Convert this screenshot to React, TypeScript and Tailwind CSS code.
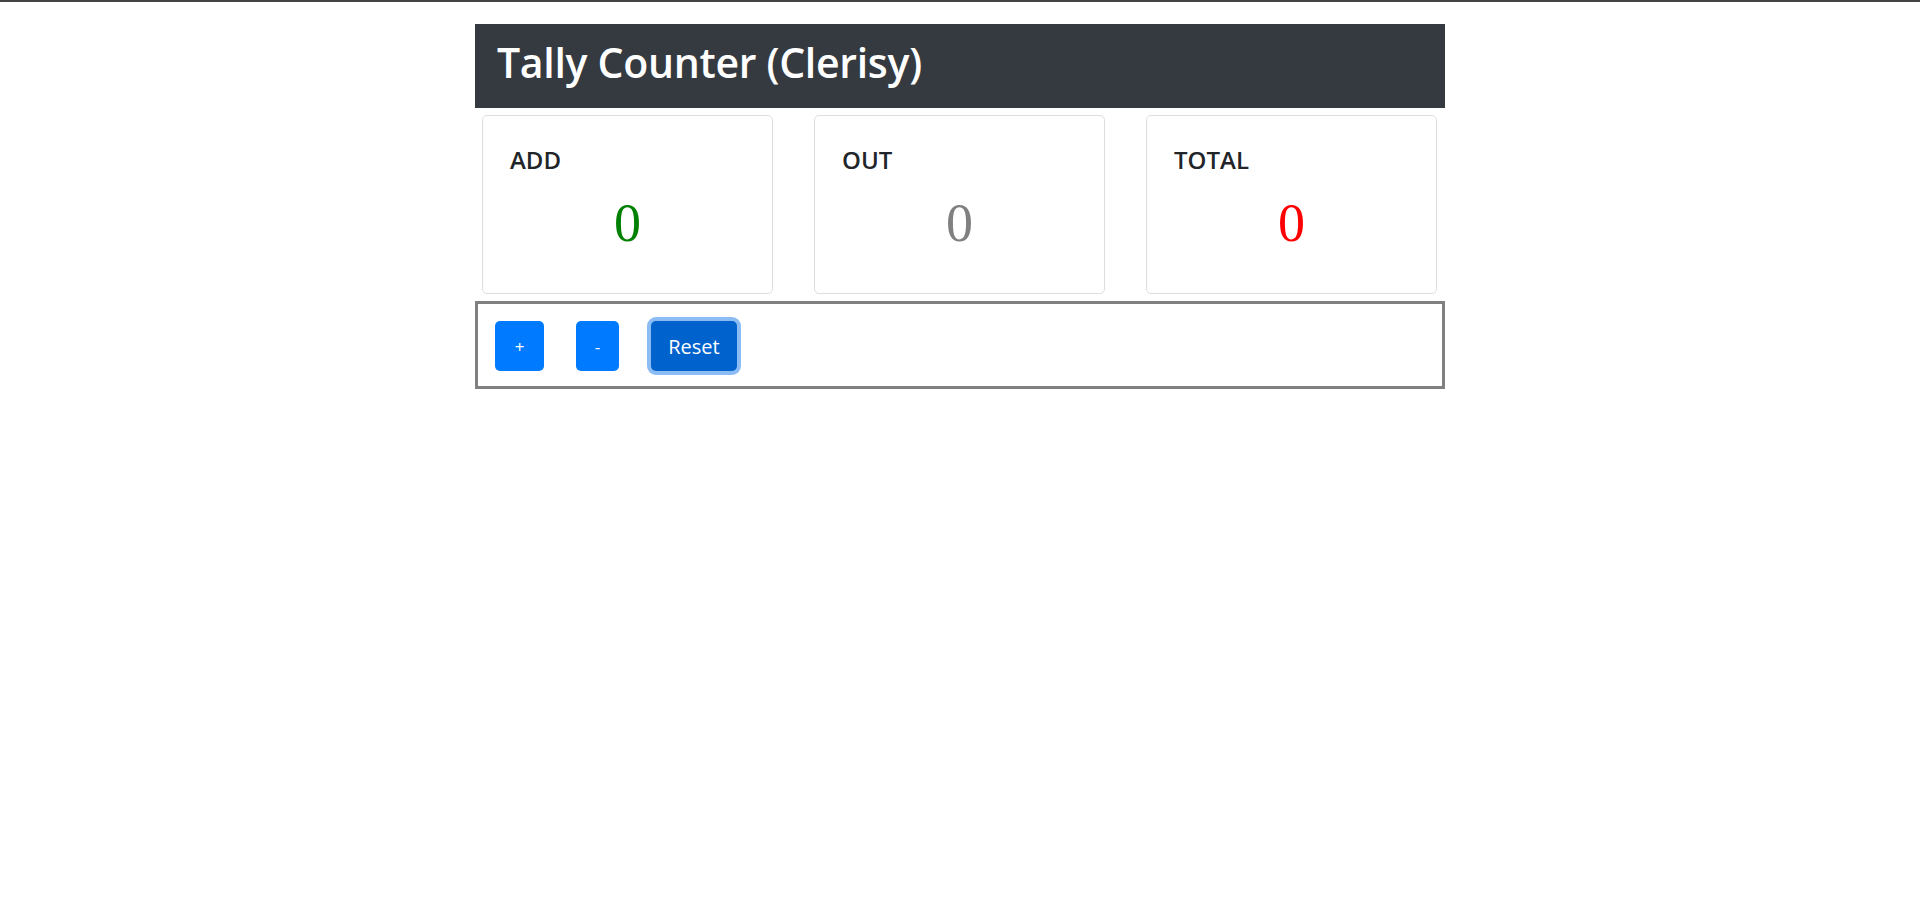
export default function App() {
  const cards = [
    { label: "ADD", value: 0, color: "text-[#008000]" },
    { label: "OUT", value: 0, color: "text-[#808080]" },
    { label: "TOTAL", value: 0, color: "text-[#ff0000]" },
  ];

  return (
    <div className="min-h-[904px] bg-white border-t-2 border-[#444444] font-['Open_Sans',sans-serif]">
      <div className="w-[970px] mx-auto pt-[22px]">
        <div className="h-[84px] bg-[#343a40] pt-[18px] pl-[22px]">
          <h1 className="text-white text-[41px] font-semibold leading-none tracking-[-0.3px]">
            Tally Counter (Clerisy)
          </h1>
        </div>

        <div className="flex gap-[41px] px-[7px] mt-[7px]">
          {cards.map((c) => (
            <div
              key={c.label}
              className="w-[291px] h-[179px] border border-[#dedede] rounded-[5px] pt-[32px] px-[27px]"
            >
              <div className="text-[24px] font-semibold text-[#212529] leading-none">{c.label}</div>
              <div className={`text-center font-['Liberation_Serif',serif] text-[54px] leading-none mt-[24px] ${c.color}`}>
                {c.value}
              </div>
            </div>
          ))}
        </div>

        <div className="mt-[7px] h-[88px] border-[3px] border-[#808080] flex items-start pt-[17px] pl-[17px]">
          <button className="w-[49px] h-[50px] rounded-[5px] bg-[#007bff] text-white text-[17px] leading-none">
            +
          </button>
          <button className="ml-[32px] w-[43px] h-[50px] rounded-[5px] bg-[#007bff] text-white text-[17px] leading-none">
            -
          </button>
          <button className="ml-[32px] w-[86px] h-[50px] rounded-[5px] bg-[#0062cc] text-white text-[20px] leading-none pt-[2px] ring-4 ring-[#8cbcf4]">
            Reset
          </button>
        </div>
      </div>
    </div>
  );
}
